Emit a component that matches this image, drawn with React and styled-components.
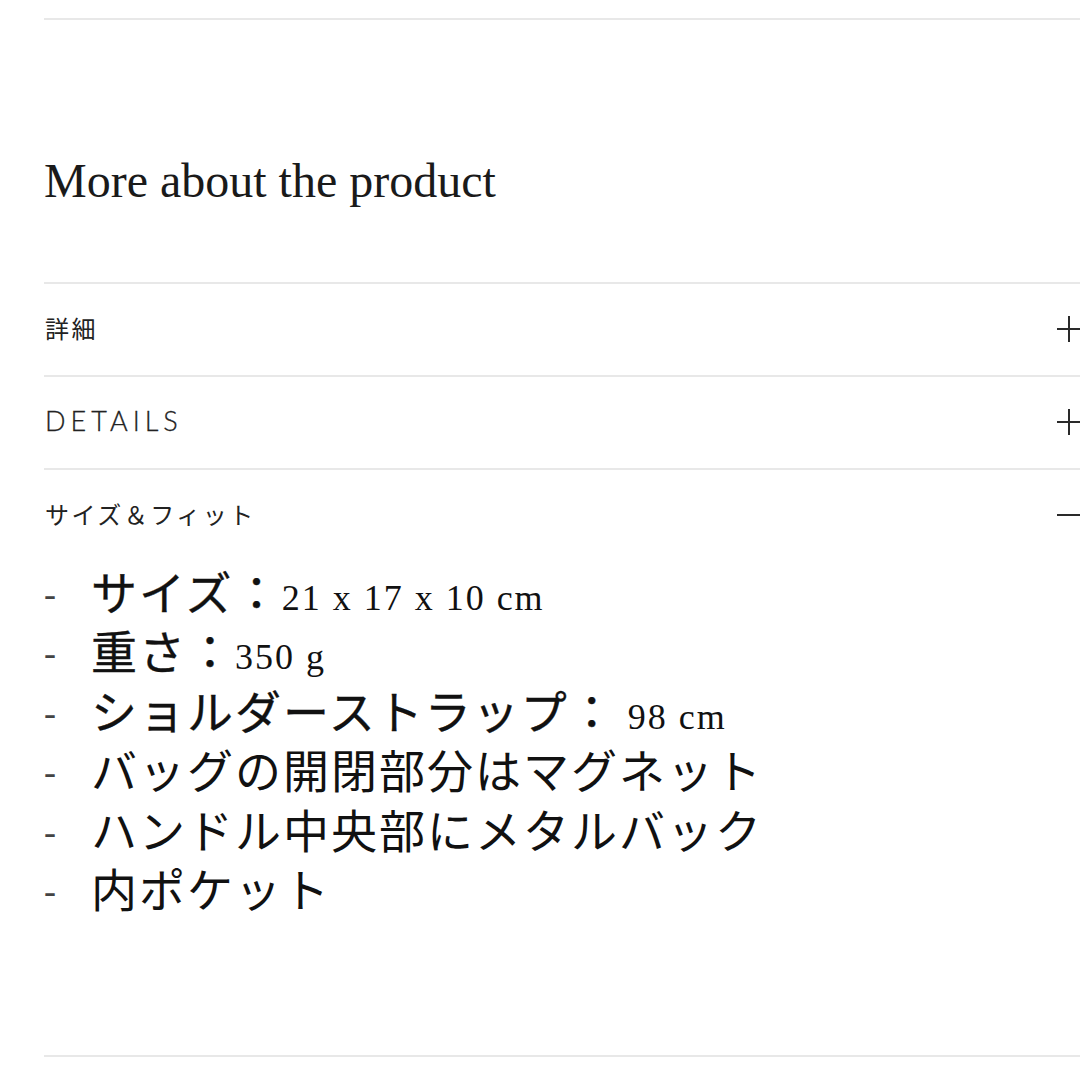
import React, { useState } from "react";
import styled, { createGlobalStyle } from "styled-components";

const GlobalStyle = createGlobalStyle`
  html, body {
    margin: 0;
    padding: 0;
    background: #fff;
    overflow: hidden;
  }
  body {
    font-family: "Noto Sans CJK JP", "Noto Sans", sans-serif;
    color: #1a1a1a;
  }
`;

const Page = styled.div`
  padding: 18px 0 0 44px;
  width: 1037px;
`;

const Divider = styled.div`
  height: 2px;
  background: #e8e8e8;
`;

const Heading = styled.h2`
  margin: 132px 0 72px;
  font-family: "Liberation Serif", "DejaVu Serif", serif;
  font-weight: 400;
  font-size: 48px;
  line-height: 1.2;
  color: #1a1a1a;
`;

const Item = styled.section`
  border-top: 2px solid #e8e8e8;
  &:last-child {
    border-bottom: 2px solid #e8e8e8;
  }
`;

const Header = styled.button`
  display: flex;
  align-items: center;
  justify-content: space-between;
  width: 100%;
  height: 91px;
  padding: 0;
  border: 0;
  background: none;
  cursor: pointer;
  color: #222;
`;

const Title = styled.span`
  font-family: ${(p) =>
    p.$latin
      ? `"Lato", "Liberation Sans", sans-serif`
      : `"Noto Sans CJK JP", sans-serif`};
  font-weight: ${(p) => (p.$latin ? 300 : 400)};
  font-size: ${(p) => (p.$latin ? "27px" : "24px")};
  letter-spacing: ${(p) => (p.$latin ? "5px" : "2.5px")};
  -webkit-text-stroke: ${(p) => (p.$latin ? "0.3px #222" : "0")};
  padding-left: 1px;
  margin-top: -3px;
`;

const Body = styled.ul`
  list-style: none;
  margin: 0;
  padding: 0 0 137px;
`;

const Line = styled.li`
  height: 59.5px;
  line-height: 59.5px;
  font-family: "Noto Sans CJK JP", sans-serif;
  font-size: 46px;
  letter-spacing: 2px;
  color: #111;
  white-space: nowrap;

  &::before {
    content: "-";
    display: inline-block;
    width: 47px;
    line-height: 1;
    font-family: "Liberation Serif", serif;
    font-size: 36px;
    color: #444;
    vertical-align: baseline;
    position: relative;
    top: -4px;
  }
`;

const Label = styled.span`
  font-weight: 400;
  -webkit-text-stroke: 0.35px #111;
`;

const Value = styled.span`
  font-family: "Liberation Serif", "DejaVu Serif", serif;
  font-size: 36px;
  line-height: 1;
  letter-spacing: 2px;
  white-space: pre;
`;

const Toggle = ({ open }) => (
  <svg width="24" height="26" viewBox="0 0 24 26" fill="none">
    <line x1="0" y1="13" x2="24" y2="13" stroke="#2a2a2a" strokeWidth="2" />
    {!open && (
      <line x1="12" y1="0" x2="12" y2="26" stroke="#2a2a2a" strokeWidth="2" />
    )}
  </svg>
);

const sizeFit = [
  { label: "サイズ：", value: "21 x 17 x 10 cm" },
  { label: "重さ：", value: "350 g" },
  { label: "ショルダーストラップ：", value: " 98 cm" },
  { text: "バッグの開閉部分はマグネット" },
  { text: "ハンドル中央部にメタルバック" },
  { text: "内ポケット" },
];

const sections = [
  { id: "ja", title: "詳細" },
  { id: "en", title: "DETAILS", latin: true },
  { id: "size", title: "サイズ＆フィット", items: sizeFit },
];

export default function App() {
  const [open, setOpen] = useState("size");

  return (
    <>
      <GlobalStyle />
      <Page>
        <Divider />
        <Heading>More about the product</Heading>
        {sections.map((s) => (
          <Item key={s.id}>
            <Header onClick={() => setOpen(open === s.id ? null : s.id)}>
              <Title $latin={s.latin}>{s.title}</Title>
              <Toggle open={open === s.id} />
            </Header>
            {open === s.id && s.items && (
              <Body>
                {s.items.map((it, i) => (
                  <Line key={i}>
                    {it.text ? (
                      it.text
                    ) : (
                      <>
                        <Label>{it.label}</Label>
                        <Value>{it.value}</Value>
                      </>
                    )}
                  </Line>
                ))}
              </Body>
            )}
          </Item>
        ))}
      </Page>
    </>
  );
}
